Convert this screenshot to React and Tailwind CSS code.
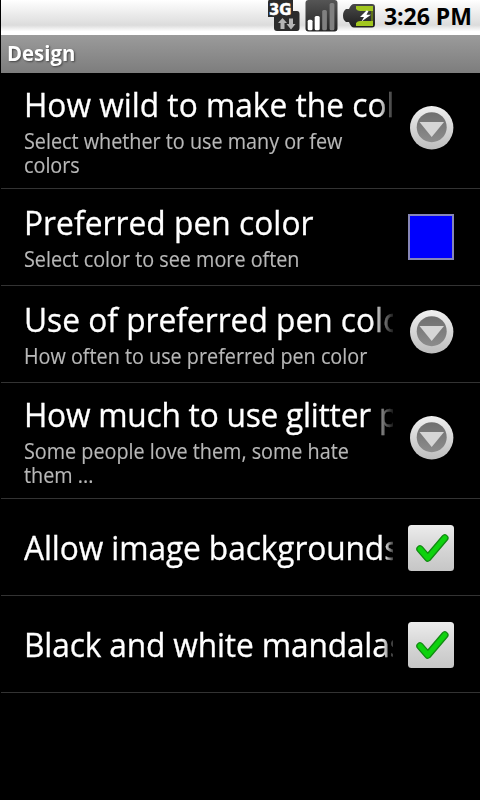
import { useState } from "react";


const settings = [
    { id: "wild", type: "list", title: "How wild to make the colors", summary: "Select whether to use many or few colors", tall: true, fade: "mask-linear-[to_right,#000_354px,transparent_372px]" },
    { id: "pen", type: "color", title: "Preferred pen color", summary: "Select color to see more often", tracking: "tracking-[0.05px]" },
    { id: "often", type: "list", title: "Use of preferred pen color", summary: "How often to use preferred pen color", fade: "mask-linear-[to_right,#000_347px,transparent_372px]" },
    { id: "glitter", type: "list", title: "How much to use glitter pens", summary: "Some people love them, some hate them ...", tall: true, tracking: "tracking-[-0.25px]", fade: "mask-linear-[to_right,#000_344px,transparent_372px]" },
    { id: "images", type: "check", title: "Allow image backgrounds", tracking: "tracking-[-0.1px]", fade: "mask-linear-[to_right,#000_360px,transparent_372px]" },
    { id: "bw", type: "check", title: "Black and white mandalas", tracking: "tracking-[-0.15px]", fade: "mask-linear-[to_right,#000_358px,transparent_372px]" },
]

const App = () => {
    const [checked, setChecked] = useState({ images: true, bw: true })

    const toggle = (id) => {
        setChecked(prev => ({ ...prev, [id]: !prev[id] }))
    }

    return (
        <div className="w-[480px] h-[800px] overflow-hidden bg-black pl-px font-['Open_Sans','Noto_Sans',sans-serif]">
            <StatusBar />
            <div className="h-[38px] flex items-center pl-1.5 bg-linear-to-b from-[#9b9b9b] to-[#7d7d7d]">
                <h1 className="-mt-0.5 text-[21px] leading-6 font-bold text-white origin-left scale-x-[0.97] [text-shadow:1px_1px_2px_#444]">Design</h1>
            </div>
            <div>
                {settings.map(item => (
                    <Row key={item.id} item={item} checked={checked[item.id]} toggle={toggle} />
                ))}
            </div>
        </div>
    )
}

const StatusBar = () => {
    return (
        <div className="h-[35px] flex items-start justify-end pr-2 bg-linear-to-b from-white from-0% via-[#dcdcdc] via-72% to-white to-90%">
            <NetworkIcon />
            <SignalIcon />
            <BatteryIcon />
            <div className="ml-2 pt-0.5 text-[23px] leading-7 font-bold text-black whitespace-nowrap">3:26 PM</div>
        </div>
    )
}

const Row = ({ item, checked, toggle }) => {
    return (
        <div
            className={`${item.tall ? "h-[116px]" : "h-[97px]"} flex items-center pl-[23px] pr-[26px] border-b border-[#333]`}
            onClick={() => item.type === "check" && toggle(item.id)}
        >
            <div className="w-[369px] shrink-0">
                <div className={`overflow-hidden ${item.summary ? "-mt-0.5 mb-0.5" : "mt-0.5"} ${item.fade || ""}`}>
                    <div className={`text-[33px] leading-[44px] text-white whitespace-nowrap origin-left scale-x-[0.96] [-webkit-text-stroke:0.3px_#fff] ${item.tracking || ""}`}>{item.title}</div>
                </div>
                {item.summary && <div className="text-[21px] leading-6 text-[#b8b8b8] origin-left scale-x-[0.942] [-webkit-text-stroke:0.15px_#b8b8b8]">{item.summary}</div>}
            </div>
            <div className="flex-1 flex justify-end">
                {item.type === "list" && <MoreIcon tall={item.tall} />}
                {item.type === "color" && <div className="size-[46px] border-2 border-[#8686b8] bg-[#0000fe]" />}
                {item.type === "check" && <CheckIcon checked={checked} />}
            </div>
        </div>
    )
}

const MoreIcon = ({ tall }) => (
    <svg className={tall ? "mb-1.5" : "mb-1"} width="46" height="46" viewBox="0 0 46 46">
        <defs>
            <linearGradient id="ring" x1="0" y1="0" x2="0" y2="1">
                <stop offset="0" stopColor="#f0f0f0" />
                <stop offset="1" stopColor="#bdbdbd" />
            </linearGradient>
            <linearGradient id="disc" x1="0" y1="0" x2="0" y2="1">
                <stop offset="0" stopColor="#6f6f6f" />
                <stop offset="1" stopColor="#8c8c8c" />
            </linearGradient>
        </defs>
        <circle cx="23.7" cy="22.8" r="21.7" fill="url(#ring)" />
        <circle cx="23.7" cy="22.2" r="15" fill="url(#disc)" />
        <path d="M11.500 17H36L23.700 32Z" fill="#d6d6d6" />
    </svg>
)

const CheckIcon = ({ checked }) => (
    <svg className="mt-0.5" width="46" height="46" viewBox="0 0 46 46">
        <defs>
            <linearGradient id="box" x1="0" y1="0" x2="0" y2="1">
                <stop offset="0" stopColor="#ececec" />
                <stop offset="0.5" stopColor="#d6d6d6" />
                <stop offset="1" stopColor="#c6c6c6" />
            </linearGradient>
        </defs>
        <rect width="46" height="46" rx="3.5" fill="url(#box)" />
        {checked && <>
            <path d="M12 24L19.800 33L36.800 13" fill="none" stroke="#128a12" strokeWidth="7.5" strokeLinecap="round" strokeLinejoin="round" />
            <path d="M12 24L19.800 33L36.800 13" fill="none" stroke="#0ed20e" strokeWidth="5" strokeLinecap="round" strokeLinejoin="round" />
        </>}
    </svg>
)

const NetworkIcon = () => (
    <svg width="33" height="32" viewBox="0 0 33 32">
        <path d="M2 0H26V11H30Q32.500 11 32.500 14V28Q32.500 31 30 31H10Q7 31 7 28V17H1V2Q1 0 2 0Z" fill="#2b2b2b" />
        <text x="2" y="14.800" textLength="22.500" lengthAdjust="spacingAndGlyphs" fontFamily="DejaVu Sans" fontWeight="bold" fontSize="16" fill="#fff" stroke="#fff" strokeWidth="0.5">3G</text>
        <path d="M15.500 18L20 23H17.500V29H13.500V23H11ZM24 29.500L19.500 24H22V18.500H26V24H28.500Z" fill="#b4b4b4" />
    </svg>
)

const SignalIcon = () => (
    <svg className="ml-[5px]" width="33" height="32" viewBox="0 0 33 32">
        <defs>
            <linearGradient id="sig" x1="0" y1="0" x2="0" y2="1">
                <stop offset="0" stopColor="#555" />
                <stop offset="1" stopColor="#252525" />
            </linearGradient>
        </defs>
        <rect x="0.500" y="0" width="32" height="31.500" rx="3" fill="url(#sig)" />
        <rect x="2.700" y="19.700" width="4.800" height="10.500" rx="1.500" fill="#fff" />
        <rect x="9.700" y="16" width="5" height="14.200" rx="1.500" fill="#fff" />
        <rect x="17.200" y="10" width="4.700" height="20.200" rx="1.500" fill="#808080" />
        <rect x="24.600" y="3" width="4.800" height="27.200" rx="1.500" fill="#808080" />
    </svg>
)

const BatteryIcon = () => (
    <svg className="ml-[5px]" width="33" height="32" viewBox="0 0 33 32">
        <defs>
            <linearGradient id="cell" x1="0" y1="0" x2="0" y2="1">
                <stop offset="0" stopColor="#4a4a4a" />
                <stop offset="1" stopColor="#1e1e1e" />
            </linearGradient>
        </defs>
        <path d="M11 4H29Q32 4 32 7V24Q32 27.500 29 27.500H11Q8 27.500 6 22H3Q0 20 0 15.500Q0 11 3 9H6Q8 4 11 4Z" fill="url(#cell)" />
        <path d="M13 6H30V11H17Q14.500 11 13 9ZM13 26H30V21H17Q14.500 21 13 23Z" fill="#a2c71f" />
        <path d="M28 11H30V21H28Z" fill="#5d7118" />
        <path d="M23.500 10.500L17 17H21L18.500 21.500L28 14.800H23.500L25.500 11Z" fill="#fff" />
    </svg>
)

export default App
